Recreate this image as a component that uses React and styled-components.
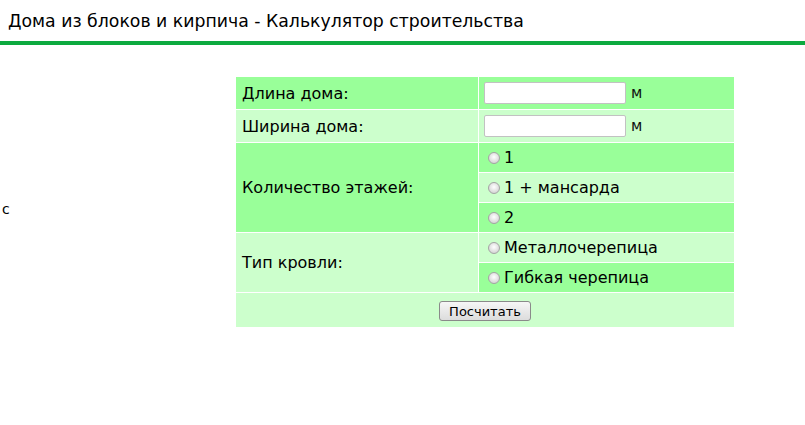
import React from "react";
import styled, { createGlobalStyle } from "styled-components";

const GlobalStyle = createGlobalStyle`
  body {
    margin: 0;
    background: #ffffff;
    font-family: "DejaVu Sans", sans-serif;
    color: #000000;
  }
`;

const Header = styled.div`
  height: 41px;
  padding-left: 8px;
  border-bottom: 4px solid #0daa3f;
  display: flex;
  align-items: center;
  font-size: 17.3px;
`;

const Main = styled.div`
  display: flex;
  align-items: center;
  margin-top: 32px;
`;

const Side = styled.div`
  width: 236px;
  padding-left: 2px;
  box-sizing: border-box;
  font-size: 14px;
  padding-top: 14px;
`;

const Calc = styled.div`
  width: 498px;
  display: grid;
  grid-template-columns: 242px 255px;
  grid-template-rows: 32px 32px 29px 29px 29px 29px 29px 34px;
  gap: 1px;
  background: #ffffff;
  font-size: 16px;
`;

const Cell = styled.div`
  background: ${(p) => (p.$light ? "#ccffcc" : "#99ff99")};
  display: flex;
  align-items: center;
  padding-left: ${(p) => (p.$label ? "6px" : "5px")};
  grid-row: ${(p) => p.$rows || "auto"};
  grid-column: ${(p) => p.$cols || "auto"};
  justify-content: ${(p) => (p.$center ? "center" : "flex-start")};
  ${(p) => p.$center && "padding-left: 0;"}
`;

const Field = styled.input`
  width: 142px;
  height: 22px;
  box-sizing: border-box;
  border: 1px solid #c2c2c2;
  border-radius: 2px;
  background: #ffffff;
  margin: 0;
`;

const Unit = styled.span`
  margin-left: 5px;
  font-size: 15px;
  color: #111;
`;

const Radio = styled.span`
  width: 12px;
  height: 12px;
  border-radius: 50%;
  border: 1px solid #a4a4a4;
  background: radial-gradient(circle at 50% 40%, #ffffff 0%, #e4e4e4 50%, #c8c8c8 100%);
  margin-right: 4px;
  margin-left: 4px;
  box-sizing: border-box;
  flex: none;
`;

const Button = styled.button`
  width: 92px;
  height: 20px;
  padding: 0;
  border: 1px solid #8a8a8a;
  border-radius: 3px;
  background: linear-gradient(#f6f6f6, #dcdcdc);
  font-family: "DejaVu Sans", sans-serif;
  font-size: 13px;
  color: #000;
  margin-top: 2px;
`;

function Option({ light, children }) {
  return (
    <Cell $light={light}>
      <Radio />
      {children}
    </Cell>
  );
}

export default function App() {
  return (
    <>
      <GlobalStyle />
      <Header>Дома из блоков и кирпича - Калькулятор строительства</Header>
      <Main>
        <Side>с</Side>
        <Calc>
          <Cell $label>Длина дома:</Cell>
          <Cell>
            <Field />
            <Unit>м</Unit>
          </Cell>
          <Cell $label $light>Ширина дома:</Cell>
          <Cell $light>
            <Field />
            <Unit>м</Unit>
          </Cell>
          <Cell $label $rows="span 3">Количество этажей:</Cell>
          <Option>1</Option>
          <Option light>1 + мансарда</Option>
          <Option>2</Option>
          <Cell $label $light $rows="span 2">Тип кровли:</Cell>
          <Option light>Металлочерепица</Option>
          <Option>Гибкая черепица</Option>
          <Cell $light $center $cols="span 2">
            <Button>Посчитать</Button>
          </Cell>
        </Calc>
      </Main>
    </>
  );
}
